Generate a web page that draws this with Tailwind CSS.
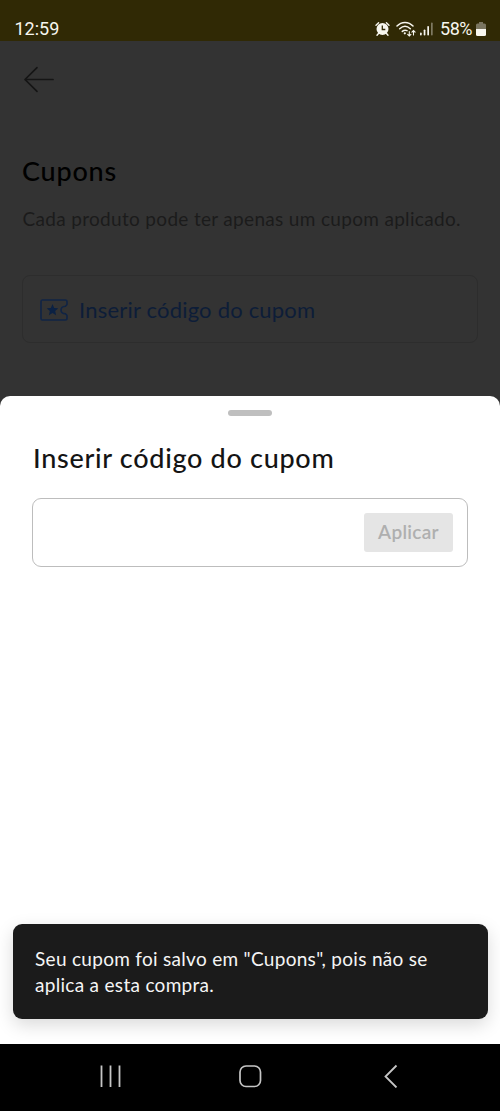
<!DOCTYPE html>
<html lang="pt-BR">
<head>
  <meta charset="UTF-8">
  <meta name="viewport" content="width=device-width, initial-scale=1.0">
  <title>Cupons</title>
  <script src="https://cdn.jsdelivr.net/npm/@tailwindcss/browser@4"></script>
</head>
<body class="w-[500px] h-[1111px] flex flex-col overflow-hidden bg-[#333333] font-['Lato',sans-serif] whitespace-nowrap">
  <!-- status bar -->
  <div class="h-[41px] shrink-0 bg-[#302905] text-[#f7f6ef] flex items-end justify-between pl-[14.5px] pr-[14px] pb-px font-['Roboto',sans-serif] text-[18px] leading-[22px]">
    <span>12:59</span>
    <div class="flex items-center">
      <svg class="w-[15px] h-4 mr-[6px]" viewBox="0 0 15 16" fill="none" stroke="currentColor">
        <circle cx="7.5" cy="8" r="6" fill="currentColor" stroke="none"/>
        <path d="M1 4.2 3.6 1.8M14 4.2 11.4 1.8M3.5 12.5 2 14.3M11.5 12.5 13 14.3" stroke-width="1.4" stroke-linecap="round"/>
        <path d="M7.3 4.5V8.5H10.3" stroke="#302905" stroke-width="1.3"/>
      </svg>
      <svg class="w-5 h-4 mr-1" viewBox="0 0 20 16" fill="none" stroke="currentColor" stroke-width="1.5" stroke-linecap="round">
        <path d="M1 5C5.5 .2 12.5 .2 17 5M3.7 7.8C7 4.600 11 4.600 14.3 7.8M6.3 10.400C8 9 9.500 8.900 11 9.600"/>
        <circle cx="8.8" cy="12.300" r="1.1" fill="currentColor" stroke="none"/>
        <path d="M13.300 10.500V14.800M11.700 13.300 13.300 15 14.900 13.300M17.500 14V9.500M15.900 11.200 17.500 9.500 19.100 11.200" stroke-width="1.100"/>
      </svg>
      <svg class="w-[13px] h-4 mr-[7px]" viewBox="0 0 13 16" fill="currentColor">
        <rect x="0" y="11.5" width="1.7" height="3" rx=".8"/>
        <rect x="3.7" y="8.5" width="1.7" height="6" rx=".8"/>
        <rect x="7.3" y="5" width="1.7" height="9.5" rx=".8"/>
        <rect x="11" y="1.5" width="1.7" height="13" rx=".8" opacity=".4"/>
      </svg>
      <span class="mr-[4px] tracking-[-0.5px]">58%</span>
      <svg class="w-[10px] h-4" viewBox="0 0 10 16">
        <path d="M3 1H7V2.5H8.5Q10 2.5 10 4V8H0V4Q0 2.5 1.5 2.5H3Z" fill="#7a7560"/>
        <path d="M0 8H10V13.5Q10 15 8.5 15H1.5Q0 15 0 13.5Z" fill="#f7f6ef"/>
      </svg>
    </div>
  </div>

  <!-- dimmed page -->
  <main class="h-[355px] shrink-0 px-[22px] pt-[25px]">
    <svg class="w-8 h-[28px] text-[#151515]" viewBox="0 0 32 28" fill="none" stroke="currentColor" stroke-width="1.7" stroke-linecap="round" stroke-linejoin="round">
      <path d="M31 13.5H3M15 1.7 3 13.5 15 25.3"/>
    </svg>
    <h1 class="mt-[61px] text-[27px] leading-8 font-medium tracking-[0.8px] text-black">Cupons</h1>
    <p class="mt-[20px] pl-[0.5px] text-[19px] leading-6 tracking-[0.32px] text-[#1b1b1b]">Cada produto pode ter apenas um cupom aplicado.</p>
    <div class="mt-[44px] h-[68px] border border-[#2d2d2d] rounded-lg flex items-center pl-[17px]">
      <svg class="w-7 h-[22px] mr-[11px] mt-px" viewBox="0 0 28 22">
        <path d="M2.2 1H25.3Q27 1 27 2.7V5.500L25.500 7.200C19.500 7.500 19.500 14.500 25.500 14.800L27 16.500V19.3Q27 21 25.3 21H2.2Q1 21 1 19.3V2.7Q1 1 2.2 1Z" fill="none" stroke="#102445" stroke-width="1.6" stroke-linejoin="round"/>
        <path d="M12.5 5 14.2 8.9 18.3 9.3 15.2 12.1 16.1 16.2 12.5 14.1 8.9 16.2 9.8 12.1 6.7 9.3 10.8 8.9Z" fill="#0b2143"/>
      </svg>
      <span class="pt-px text-[22px] leading-7 tracking-[0.2px] text-[#0d1d38]">Inserir código do cupom</span>
    </div>
  </main>

  <!-- bottom sheet -->
  <section class="h-[648px] shrink-0 bg-white rounded-t-[10px] px-8 flex flex-col">
    <div class="mt-[14px] w-[44px] h-[6px] rounded-full bg-[#bfbfbf] self-center"></div>
    <h2 class="mt-[26px] pl-px text-[27px] leading-8 font-medium tracking-[0.7px] text-[#141414]">Inserir código do cupom</h2>
    <div class="mt-[24px] h-[69px] border-[1.5px] border-[#bdbdbd] rounded-[9px] flex items-center justify-end pr-[14px]">
      <button class="w-[89px] h-[39px] rounded-[3px] bg-[#e5e5e5] text-[#afafaf] text-[19px] font-semibold tracking-[0.3px]">Aplicar</button>
    </div>
    <div class="mt-auto mb-[25px] -mx-[19.5px] h-[95px] rounded-[9px] bg-[#1b1b1b] pl-[22.5px] pt-[22px] text-[19px] leading-[26px] tracking-[0.3px] text-[#f5f5f5] shadow-[0_6px_18px_rgba(0,0,0,0.15)]">
      Seu cupom foi salvo em "Cupons", pois não se<br>aplica a esta compra.
    </div>
  </section>

  <!-- system navigation -->
  <nav class="h-[67px] shrink-0 bg-black text-[#c6c6c6] flex justify-between px-[98px] pt-5">
    <svg class="w-6 h-6" viewBox="0 0 24 24" stroke="currentColor" stroke-width="1.8">
      <path d="M3.5 1.5V23M12.5 1.5V23M21.5 1.5V23"/>
    </svg>
    <svg class="w-6 h-6" viewBox="0 0 24 24" fill="none" stroke="currentColor" stroke-width="1.7">
      <rect x="2" y="2" width="20.5" height="20.5" rx="6"/>
    </svg>
    <svg class="w-6 h-6" viewBox="0 0 24 24" fill="none" stroke="currentColor" stroke-width="1.8">
      <path d="M18.500 1.5 7.500 12.5 18.500 23.5"/>
    </svg>
  </nav>
</body>
</html>
